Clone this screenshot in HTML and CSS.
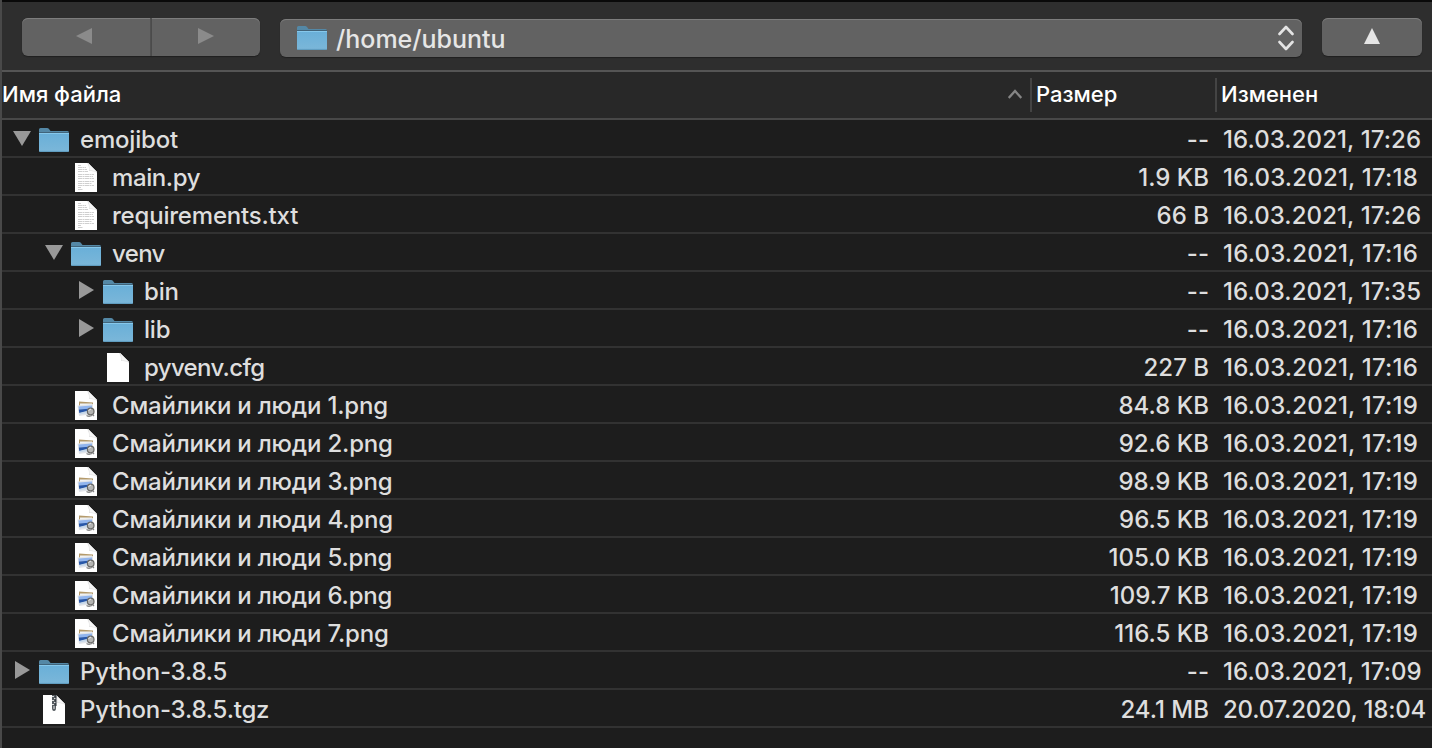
FILE: index.html
```
<!DOCTYPE html>
<html lang="ru">
<head>
<meta charset="utf-8">
<title>/home/ubuntu</title>
<link rel="stylesheet" href="styles.css">
</head>
<body>
<svg class="defs" width="0" height="0" aria-hidden="true">
  <defs>
    <linearGradient id="blue" x1="0" y1="0" x2="0" y2="1"><stop offset="0" stop-color="#69afd8"/><stop offset="1" stop-color="#7bb7d9"/></linearGradient>
    <symbol id="folder" viewBox="0 0 30 24">
      <path d="M0 6V1.500Q0 0 1.500 0H8Q9.400 0 10 1L11.500 3H28.500Q30 3 30 4.500V8H0z" fill="#5488a6"/>
      <path d="M0 4.500H30" stroke="#41647a"/>
      <path d="M0 5H30V22.500Q30 24 28.500 24H1.500Q0 24 0 22.500z" fill="url(#blue)"/>
      <path d="M0 5.500H30" stroke="#86c8eb"/>
      <path d="M0.500 23.400H29.500" stroke="#5d9abd"/>
    </symbol>
    <symbol id="page" viewBox="0 0 22 29">
      <path d="M0 0H13L22 9V29H0z" fill="#fff"/>
      <path d="M12 0H13L22 9V10Q20 7.500 14 8Q14.500 3 12 0z" fill="#dcdcdc"/>
      <path d="M13 0L22 9Q19 7 14.500 7.500Q15 3 13 0z" fill="#f7f7f7"/>
    </symbol>
    <symbol id="text" viewBox="0 0 22 29">
      <use href="#page" width="22" height="29"/>
      <path d="M3 2.500H6M3 4.500H11M3 6.500H12M3 8.500H13M3 11.500H19M3 13.500H18M3 15.500H19M3 18.500H19M3 20.500H17M3 22.500H19M3 24.500H6M3 26.500H8" stroke="#cfcfcf" stroke-width="1" stroke-dasharray="4 .5 2 .5"/>
    </symbol>
    <symbol id="image" viewBox="0 0 22 29">
      <use href="#page" width="22" height="29"/>
      <path d="M4 10.500L18 11.500V20L4 19z" fill="#b49a6b"/>
      <path d="M5 12.500H17V18H5z" fill="#f0f2f4"/>
      <path d="M2.500 14.500L18 13V23L4 25z" fill="#e1e4e9"/>
      <path d="M3.500 15.500L17 14.500V17.500L4 18.500z" fill="#91b5ee"/>
      <path d="M3.800 18.500L17 17.500V20L4.300 22z" fill="#2857a8"/>
      <path d="M4.500 22L13 19.500V22L4.500 23.500z" fill="#c7d8ea"/>
      <circle cx="15.700" cy="20.500" r="3.300" fill="#b5b5b3" stroke="#696967" stroke-width="1.200"/>
      <path d="M13.500 19.500L16 18" stroke="#eee"/>
      <path d="M17.500 23.500L19 25M11.500 24.500Q14 26 17 24.500" stroke="#858585" stroke-width="1.300" fill="none"/>
    </symbol>
    <symbol id="archive" viewBox="0 0 22 29">
      <use href="#page" width="22" height="29"/>
      <path d="M9 0H13V13Q13 16 11 16Q9 16 9 13z" fill="#555b60"/>
      <path d="M9 1.500H11M11 3.500H13M9 5.500H11M11 7.500H13M9 9.500H11" stroke="#ddd"/>
      <path d="M10.500 11H11.500V14H10.500z" fill="#eee"/>
      <path d="M13 0V11" stroke="#252b30"/>
    </symbol>
    <symbol id="open" viewBox="0 0 18 15"><path d="M0 0H18L9 15z" fill="#999"/></symbol>
    <symbol id="closed" viewBox="0 0 15 18"><path d="M0 0L15 9L0 18z" fill="#999"/></symbol>
  </defs>
</svg>
<main class="browser">
  <div class="toolbar">
    <div class="nav">
      <button class="nav-back" aria-label="Назад"><svg width="16" height="16"><path d="M16 0V16L0 8z" fill="#8b8b8b"/></svg></button>
      <button class="nav-forward" aria-label="Вперёд"><svg width="16" height="16"><path d="M0 0V16L16 8z" fill="#8b8b8b"/></svg></button>
    </div>
    <div class="path">
      <svg class="path-icon" width="30" height="24"><use href="#folder"/></svg>
      <span class="path-text">/home/ubuntu</span>
      <svg class="stepper" width="16" height="26" fill="none" stroke="#e4e4e4" stroke-width="2.600" stroke-linecap="round" stroke-linejoin="round"><path d="M1.500 9L8 2L14.500 9M1.500 17L8 24L14.500 17"/></svg>
    </div>
    <button class="up" aria-label="Вверх"><svg width="16" height="16"><path d="M8 0L16 16H0z" fill="#e5e5e5"/></svg></button>
  </div>
  <div class="head">
    <div class="h-name"><span>Имя файла</span><svg width="14" height="10" fill="none" stroke="#858585" stroke-width="2.300"><path d="M0.700 9L7 2L13.300 9"/></svg></div>
    <div class="h-size">Размер</div>
    <div class="h-date">Изменен</div>
  </div>
  <div class="rows">
    <div class="row"><div class="name"><svg class="arrow"><use href="#open" x="3" y="0" width="18" height="15"/></svg><svg class="folder"><use href="#folder"/></svg><span>emojibot</span></div><div class="size dash">--</div><div class="date">16.03.2021, 17:26</div></div>
    <div class="row"><div class="name d1"><i class="arrow"></i><svg class="file"><use href="#text"/></svg><span class="snug">main.py</span></div><div class="size">1.9 KB</div><div class="date wide">16.03.2021, 17:18</div></div>
    <div class="row"><div class="name d1"><i class="arrow"></i><svg class="file"><use href="#text"/></svg><span>requirements.txt</span></div><div class="size">66 B</div><div class="date">16.03.2021, 17:26</div></div>
    <div class="row"><div class="name d1"><svg class="arrow"><use href="#open" x="3" y="0" width="18" height="15"/></svg><svg class="folder"><use href="#folder"/></svg><span class="tight">venv</span></div><div class="size dash">--</div><div class="date wide">16.03.2021, 17:16</div></div>
    <div class="row"><div class="name d2"><svg class="arrow"><use href="#closed" x="5" y="-2" width="15" height="18"/></svg><svg class="folder"><use href="#folder"/></svg><span>bin</span></div><div class="size dash">--</div><div class="date">16.03.2021, 17:35</div></div>
    <div class="row"><div class="name d2"><svg class="arrow"><use href="#closed" x="5" y="-2" width="15" height="18"/></svg><svg class="folder"><use href="#folder"/></svg><span>lib</span></div><div class="size dash">--</div><div class="date wide">16.03.2021, 17:16</div></div>
    <div class="row"><div class="name d2"><i class="arrow"></i><svg class="file"><use href="#page"/></svg><span class="tight">pyvenv.cfg</span></div><div class="size">227 B</div><div class="date wide">16.03.2021, 17:16</div></div>
    <div class="row"><div class="name d1"><i class="arrow"></i><svg class="file"><use href="#image"/></svg><span>Смайлики и люди 1.png</span></div><div class="size">84.8 KB</div><div class="date wide">16.03.2021, 17:19</div></div>
    <div class="row"><div class="name d1"><i class="arrow"></i><svg class="file"><use href="#image"/></svg><span>Смайлики и люди 2.png</span></div><div class="size">92.6 KB</div><div class="date wide">16.03.2021, 17:19</div></div>
    <div class="row"><div class="name d1"><i class="arrow"></i><svg class="file"><use href="#image"/></svg><span>Смайлики и люди 3.png</span></div><div class="size">98.9 KB</div><div class="date wide">16.03.2021, 17:19</div></div>
    <div class="row"><div class="name d1"><i class="arrow"></i><svg class="file"><use href="#image"/></svg><span>Смайлики и люди 4.png</span></div><div class="size">96.5 KB</div><div class="date wide">16.03.2021, 17:19</div></div>
    <div class="row"><div class="name d1"><i class="arrow"></i><svg class="file"><use href="#image"/></svg><span>Смайлики и люди 5.png</span></div><div class="size">105.0 KB</div><div class="date wide">16.03.2021, 17:19</div></div>
    <div class="row"><div class="name d1"><i class="arrow"></i><svg class="file"><use href="#image"/></svg><span>Смайлики и люди 6.png</span></div><div class="size">109.7 KB</div><div class="date wide">16.03.2021, 17:19</div></div>
    <div class="row"><div class="name d1"><i class="arrow"></i><svg class="file"><use href="#image"/></svg><span>Смайлики и люди 7.png</span></div><div class="size">116.5 KB</div><div class="date wide">16.03.2021, 17:19</div></div>
    <div class="row"><div class="name"><svg class="arrow"><use href="#closed" x="5" y="-2" width="15" height="18"/></svg><svg class="folder"><use href="#folder"/></svg><span>Python-3.8.5</span></div><div class="size dash">--</div><div class="date">16.03.2021, 17:09</div></div>
    <div class="row"><div class="name"><i class="arrow"></i><svg class="file"><use href="#archive"/></svg><span>Python-3.8.5.tgz</span></div><div class="size">24.1 MB</div><div class="date normal">20.07.2020, 18:04</div></div>
  </div>
</main>
</body>
</html>
```
FILE: styles.css
```
* { box-sizing: border-box; }
body { margin: 0; background: #1d1d1d; overflow: hidden; }
.defs { display: block; position: absolute; }
.browser {
  width: 1432px; height: 748px; overflow: hidden;
  border-left: 2px solid #494949;
  background: #1d1d1d; color: #dedede;
  font: 450 24px/40px Inter, sans-serif;
  letter-spacing: -.2px;
}
.toolbar {
  display: flex; align-items: flex-start;
  height: 72px; padding: 16px 10px 0 20px;
  background: #2e2e2e;
  border-top: 2px solid #090909; border-bottom: 2px solid #555;
}
.nav { display: flex; width: 238px; margin-right: 20px; }
.nav button, .up, .path {
  display: flex; align-items: center; height: 38px;
  border: 0; padding: 0; background: #626262;
  box-shadow: inset 0 1px #7d7d7d, 0 1px 1px #202020;
}
.nav button, .up { justify-content: center; padding-bottom: 2px; }
.nav .nav-back { width: 130px; border-radius: 6px 0 0 6px; border-right: 2px solid #505050; padding-right: 4px; }
.nav .nav-forward { width: 108px; border-radius: 0 6px 6px 0; }
.path { width: 1022px; margin: 1px 20px 0 0; padding: 0 8px 0 17px; border-radius: 6px; }
.path-text { margin-left: 9px; padding-top: 2px; font-size: 25px; letter-spacing: 0; color: #e6e6e6; }
.stepper { margin-left: auto; }
.up { width: 100px; border-radius: 6px; }
.head {
  display: flex; height: 48px; background: #282828;
  border-bottom: 2px solid #484848;
  color: #fff; font-weight: 550; font-size: 22px; line-height: 44px;
  letter-spacing: 0;
}
.h-name { display: flex; align-items: center; justify-content: space-between; height: 44px; width: 1028px; padding-right: 8px; }
.h-size, .h-date { height: 34px; margin-top: 6px; border-left: 2px solid #444; line-height: 32px; }
.h-size { width: 185px; padding-left: 4px; }
.h-date { width: 215px; padding-left: 4px; }
.row { display: flex; height: 38px; border-bottom: 2px solid #323232; }
.name { display: flex; width: 1029px; padding-left: 8px; white-space: nowrap; }
.d1 { padding-left: 40px; }
.d2 { padding-left: 72px; }
.snug { letter-spacing: -.4px; }
.tight { letter-spacing: -.65px; }
.arrow { flex: none; display: block; width: 29px; height: 20px; margin-top: 11px; overflow: visible; }
.folder { flex: none; width: 30px; height: 24px; margin: 8px 11px 0 0; }
.file { flex: none; width: 22px; height: 29px; margin: 5px 15px 0 4px; }
.size { width: 178px; text-align: right; white-space: nowrap; letter-spacing: 0; }
.date { padding-left: 14px; white-space: nowrap; letter-spacing: .08px; }
.wide { letter-spacing: .18px; }
.normal { letter-spacing: -.18px; }
```
